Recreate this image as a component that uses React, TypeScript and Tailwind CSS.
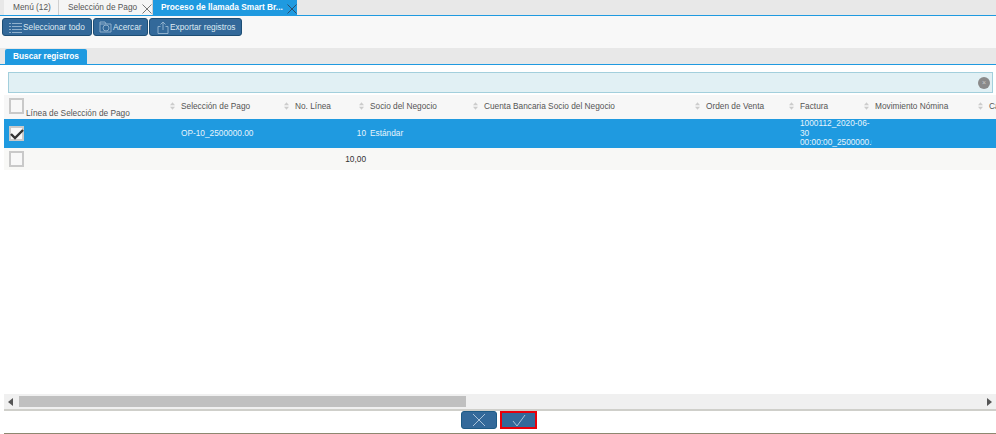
import React from 'react';

const columns = [
  { title: 'Selección de Pago', width: 'w-[114px]' },
  { title: 'No. Línea', width: 'w-[75px]' },
  { title: 'Socio del Negocio', width: 'w-[114px]' },
  { title: 'Cuenta Bancaria Socio del Negocio', width: 'w-[222px]' },
  { title: 'Orden de Venta', width: 'w-[94px]' },
  { title: 'Factura', width: 'w-[75px]' },
  { title: 'Movimiento Nómina', width: 'w-[114px]' },
  { title: 'Cargo', width: 'w-[60px]' },
];

const SortIcon = () => (
  <svg width="5" height="8" viewBox="0 0 6 9" className="-ml-[11px] mr-[6px] shrink-0">
    <path d="M3 0 L6 3.5 H0 Z" fill="#cccccc" />
    <path d="M3 9 L6 5.5 H0 Z" fill="#cccccc" />
  </svg>
);

const Check = ({ checked = false }: { checked?: boolean }) => (
  <div className={`flex w-[15px] items-center justify-center border-2 border-[#c9c9c9] bg-[#f8f8f8] ${checked ? 'h-[15px]' : 'h-4'}`}>
    {checked && (
      <svg width="14" height="12" viewBox="0 0 14 12" className="shrink-0">
        <path d="M1 6 L5 10 L13 2" fill="none" stroke="#333" strokeWidth="2.4" />
      </svg>
    )}
  </div>
);

const ToolButton = ({ icon, label, className }: { icon: React.ReactNode; label: string; className: string }) => (
  <button className={`flex h-[18px] items-center whitespace-nowrap rounded-[3px] border border-[#1d4e75] bg-[#33699a] text-[#dfe9f2] ${className}`}>
    {icon}
    <span>{label}</span>
  </button>
);

export default function App() {
  return (
    <div className="flex h-[434px] w-[996px] flex-col overflow-hidden bg-white font-['Liberation_Sans',Arial,sans-serif] text-[8.3px] text-[#555]">
      {/* tabs */}
      <div className="flex h-4 shrink-0 whitespace-nowrap border-b border-[#1f9ae0] bg-[#e8e8e8] pl-[4px]">
        <div className="flex h-[15px] w-[55px] items-center border-r border-[#d0d0d0] bg-[#f5f5f5] pl-[9px]">Menú (12)</div>
        <div className="flex h-[15px] w-[94px] items-center border-r border-[#d0d0d0] bg-[#f5f5f5] pl-[9px]">
          <span className="flex-1">Selección de Pago</span>
          <svg width="10" height="10" viewBox="0 0 10 10" className="mt-[2px]">
            <path d="M0.5 0.5 L9.5 9.5 M9.5 0.5 L0.5 9.5" stroke="#777" strokeWidth="1" />
          </svg>
        </div>
        <div className="flex h-[15px] w-[144px] items-center bg-[#1f9ae0] pl-2 font-bold text-white">
          <span className="flex-1">Proceso de llamada Smart Br...</span>
          <svg width="10" height="10" viewBox="0 0 10 10" className="mt-[2px]">
            <path d="M0.5 0.5 L9.5 9.5 M9.5 0.5 L0.5 9.5" stroke="#2a4f6e" strokeWidth="1" />
          </svg>
        </div>
      </div>

      {/* toolbar */}
      <div className="flex h-8 shrink-0 items-start bg-[#f8f8f8] pl-[2px] pt-[2px]">
        <ToolButton
          className="w-[90px] pl-[6px]"
          label="Seleccionar todo"
          icon={
            <svg width="13" height="11" viewBox="0 0 13 11" className="mr-[1px]">
              <path d="M0 1.5 H2 M3 1.5 H13 M0 4.5 H2 M3 4.5 H13 M0 7.5 H2 M3 7.5 H13 M0 10.5 H2 M3 10.5 H13" stroke="#8fb0cc" strokeWidth="1" />
            </svg>
          }
        />
        <ToolButton
          className="ml-[1px] w-[55px] pl-[5px]"
          label="Acercar"
          icon={
            <svg width="13" height="12" viewBox="0 0 13 12" className="mr-[1px]">
              <path d="M1 3 H12 V11 H1 Z M1 3 V1 H6 L7 3" fill="none" stroke="#8fb0cc" strokeWidth="1" />
              <circle cx="7" cy="7" r="3" fill="none" stroke="#8fb0cc" strokeWidth="1" />
            </svg>
          }
        />
        <ToolButton
          className="ml-[1px] w-[93px] pl-[7px]"
          label="Exportar registros"
          icon={
            <svg width="12" height="13" viewBox="0 0 12 13" className="mr-[1px]">
              <path d="M3.5 5.5 H1 V12.5 H11 V5.5 H8.5 M6 9 V1 M3.5 3.5 L6 1 L8.5 3.5" fill="none" stroke="#8fb0cc" strokeWidth="1" />
            </svg>
          }
        />
      </div>

      {/* inner tab */}
      <div className="h-[17px] shrink-0 border-b border-[#1f9ae0] bg-[#e8e8e8] pl-[5px] pt-[1px]">
        <div className="flex h-[15px] w-[82px] items-center rounded-t-[2px] bg-[#1f9ae0] pl-2 font-bold text-white">Buscar registros</div>
      </div>

      {/* filter */}
      <div className="ml-[8px] mr-[3px] mt-[7px] flex h-[21px] shrink-0 items-center justify-end border border-[#a3cfdc] bg-[#e1f0f4] pr-[2px]">
        <div className="flex h-3 w-3 items-center justify-center rounded-full bg-[#8a8a8a] text-[7px] leading-none text-[#ccc]">×</div>
      </div>

      {/* grid */}
      <div className="ml-[4px] mt-[2px] flex-1 overflow-hidden">
        <div className="flex h-[24px] w-[1100px] bg-[#f7f7f7]">
          <div className="relative w-[173px] shrink-0 pl-[5px] pt-[3px]">
            <Check />
            <span className="absolute left-[22px] top-[13px] leading-[10px]">Línea de Selección de Pago</span>
          </div>
          {columns.map((c) => (
            <div key={c.title} className={`flex h-[22px] shrink-0 items-center pl-[4px] ${c.width}`}>
              <SortIcon />
              <span>{c.title}</span>
            </div>
          ))}
        </div>

        <div className="flex h-[29px] w-[1100px] items-center bg-[#1f9ae0] text-[#e6f4fc]">
          <div className="w-[173px] shrink-0 pl-[5px]">
            <Check checked />
          </div>
          <div className="w-[114px] shrink-0 pl-[4px]">OP-10_2500000.00</div>
          <div className="w-[75px] shrink-0 text-right">10</div>
          <div className="w-[114px] shrink-0 pl-[4px]">Estándar</div>
          <div className="w-[222px] shrink-0" />
          <div className="w-[94px] shrink-0" />
          <div className="w-[76px] shrink-0 overflow-hidden pl-[4px] leading-[9.5px]">
            1000112_2020-06-
            <br />
            30
            <br />
            <span className="whitespace-nowrap">00:00:00_2500000.00</span>
          </div>
        </div>

        <div className="flex h-[22px] w-[1100px] items-center bg-[#f8f8f6]">
          <div className="w-[173px] shrink-0 pl-[5px]">
            <Check />
          </div>
          <div className="w-[114px] shrink-0" />
          <div className="w-[75px] shrink-0 text-right text-[#333]">10,00</div>
        </div>
      </div>

      {/* scrollbar */}
      <div className="ml-[4px] flex h-[15px] shrink-0 items-center bg-[#f0f0f0]">
        <svg width="6" height="8" viewBox="0 0 6 8" className="ml-[4px] shrink-0">
          <path d="M5 0 V8 L0 4 Z" fill="#555" />
        </svg>
        <div className="ml-[5px] h-[11px] w-[447px] bg-[#c0c0c0]" />
        <div className="flex-1" />
        <svg width="6" height="8" viewBox="0 0 6 8" className="mr-[4px] shrink-0">
          <path d="M1 0 V8 L6 4 Z" fill="#555" />
        </svg>
      </div>

      {/* footer */}
      <div className="ml-[4px] flex h-[25px] shrink-0 items-start gap-[3px] border-b border-t-2 border-b-[#8d8870] border-t-[#cfcfca] pl-[457px]">
        <button className="flex h-[18px] w-[36px] items-center justify-center rounded-[3px] border border-[#1d5a85] bg-[#33699a]">
          <svg width="14" height="14" viewBox="0 0 14 14">
            <path d="M1 1 L13 13 M13 1 L1 13" stroke="#a9c3da" strokeWidth="1" />
          </svg>
        </button>
        <button className="flex h-[18px] w-[37px] items-center justify-center border-2 border-[#e8000b] bg-[#33699a]">
          <svg width="14" height="13" viewBox="0 0 14 13">
            <path d="M1 7 L5 12 L13 1" fill="none" stroke="#a9c3da" strokeWidth="1" />
          </svg>
        </button>
      </div>
    </div>
  );
}
